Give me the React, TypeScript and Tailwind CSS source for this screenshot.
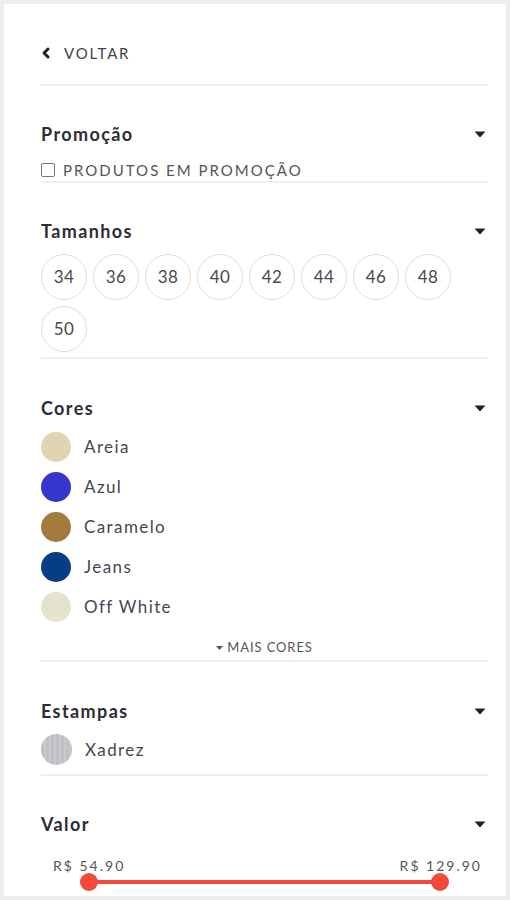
import { ChevronLeft } from 'lucide-react'

const SIZES = ['34', '36', '38', '40', '42', '44', '46', '48', '50']

const COLORS = [
  { name: 'Areia', swatch: 'bg-[#e0d5b1]' },
  { name: 'Azul', swatch: 'bg-[#3535cf]' },
  { name: 'Caramelo', swatch: 'bg-[#a57b3c]' },
  { name: 'Jeans', swatch: 'bg-[#073d84]' },
  { name: 'Off White', swatch: 'bg-[#e7e2cb]' },
]

function Caret({ className = '' }: { className?: string }) {
  return (
    <svg width="12" height="7" viewBox="0 0 12 7" className={className} aria-hidden="true">
      <path d="M0.5 0.5 L11.5 0.5 L6 6.5 Z" fill="#222" />
    </svg>
  )
}

function SectionHeader({ title }: { title: string }) {
  return (
    <div className="flex h-6 items-center justify-between">
      <h3 className="text-[18px] font-bold tracking-[1.4px] text-[#2f2c35]">{title}</h3>
      <Caret className="mr-[2px]" />
    </div>
  )
}

function Swatch({ className }: { className: string }) {
  return <span className={`h-[30px] w-[30px] shrink-0 rounded-full ${className}`} />
}

export default function App() {
  return (
    <div className="h-[900px] bg-[#eeeeee] p-1 font-['Lato','Noto_Sans',sans-serif]">
      <div className="h-full overflow-hidden bg-white pr-[18px] pl-[37px] pt-[39px]">
        <button type="button" className="flex h-5 items-center gap-[10px] text-[15px] tracking-[1.8px] text-[#444]">
          <ChevronLeft size={16} strokeWidth={4.5} className="-ml-[3px] text-[#222]" />
          VOLTAR
        </button>

        <section className="mt-[21px] border-t-2 border-[#efefef] pt-[36px] pb-[1px]">
          <SectionHeader title="Promoção" />
          <label className="mt-[14px] flex h-5 items-center gap-[8px] text-[15px] tracking-[2px] text-[#555]">
            <span className="h-[14px] w-[14px] rounded-[2px] border border-[#777]" />
            PRODUTOS EM PROMOÇÃO
          </label>
        </section>

        <section className="border-t-2 border-[#efefef] pt-[36px] pb-[5px]">
          <SectionHeader title="Tamanhos" />
          <div className="mt-[11px] flex flex-wrap gap-[6px]">
            {SIZES.map((size) => (
              <button
                key={size}
                type="button"
                className="flex h-[46px] w-[46px] items-center justify-center rounded-full border border-[#dcdcdc] text-[17px] tracking-[0.5px] text-[#4a4a4a]"
              >
                {size}
              </button>
            ))}
          </div>
        </section>

        <section className="border-t-2 border-[#efefef] pt-[37px] pb-[4px]">
          <SectionHeader title="Cores" />
          <ul className="mt-[12px] flex flex-col gap-[10px]">
            {COLORS.map((color) => (
              <li key={color.name} className="flex h-[30px] items-center gap-[13px] text-[17px] tracking-[1.4px] text-[#464650]">
                <Swatch className={color.swatch} />
                {color.name}
              </li>
            ))}
          </ul>
          <button
            type="button"
            className="mx-auto mt-[18px] flex h-4 items-center gap-[4px] text-[13px] tracking-[0.9px] text-[#555]"
          >
            <svg width="7" height="4" viewBox="0 0 7 4" aria-hidden="true">
              <path d="M0 0 L7 0 L3.5 4 Z" fill="#555" />
            </svg>
            MAIS CORES
          </button>
        </section>

        <section className="border-t-2 border-[#efefef] pt-[37px] pb-[9px]">
          <SectionHeader title="Estampas" />
          <div className="mt-[11px] flex h-[31px] items-center gap-[13px] text-[17px] tracking-[1.4px] text-[#464650]">
            <span className="h-[31px] w-[31px] shrink-0 rounded-full bg-[repeating-linear-gradient(90deg,#bfc0c5_0px,#bfc0c5_3px,#c9cace_3px,#c9cace_5px)]" />
            Xadrez
          </div>
        </section>

        <section className="border-t-2 border-[#efefef] pt-[36px]">
          <SectionHeader title="Valor" />
          <div className="mt-[19px] flex h-4 justify-between pr-[6px] pl-[12px] text-[14px] tracking-[2px] text-[#555]">
            <span>R$ 54.90</span>
            <span>R$ 129.90</span>
          </div>
          <div className="mt-[2px] flex h-[18px] items-center pl-[39px] pr-[39px]">
            <span className="h-[18px] w-[18px] shrink-0 rounded-full bg-[#f4483a]" />
            <span className="-mx-1 h-1 flex-1 bg-[#f4483a]" />
            <span className="h-[18px] w-[18px] shrink-0 rounded-full bg-[#f4483a]" />
          </div>
        </section>
      </div>
    </div>
  )
}
